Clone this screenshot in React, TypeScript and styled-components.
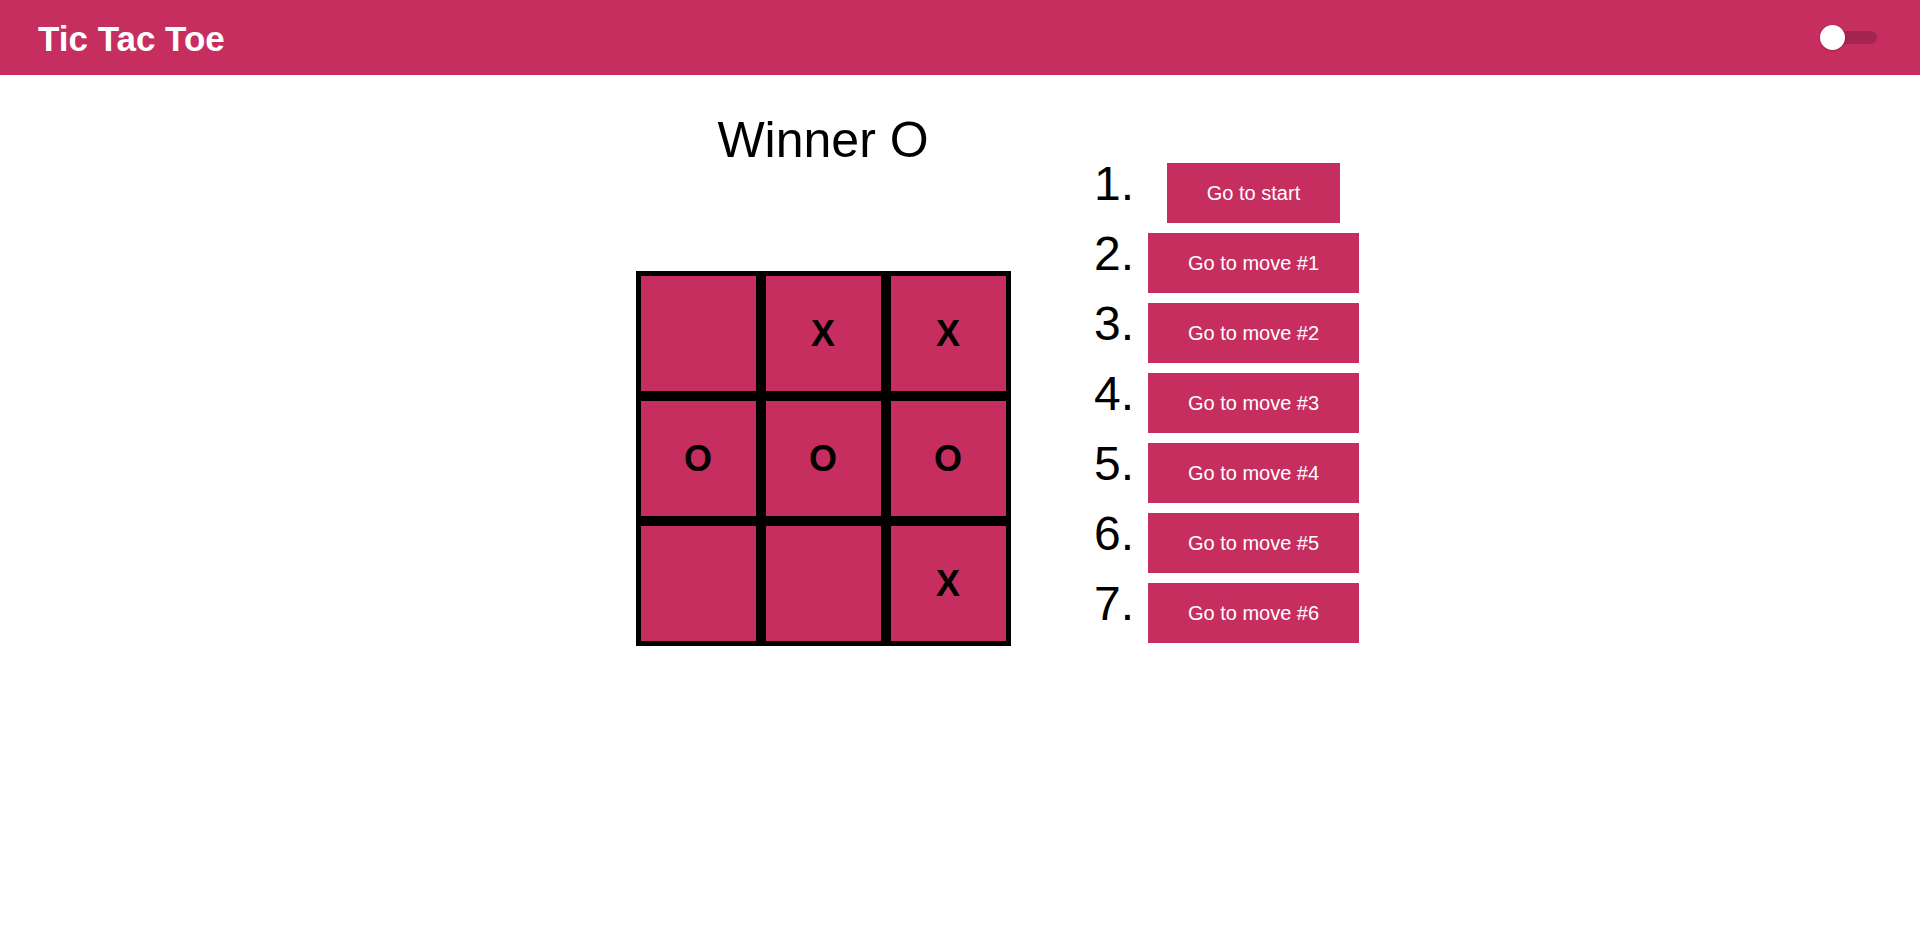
import React from "react";
import styled, { createGlobalStyle } from "styled-components";

const PINK = "#c62e5f";

const GlobalStyle = createGlobalStyle`
  html, body { margin: 0; padding: 0; background: #ffffff; }
  body { font-family: "Liberation Sans", Arial, sans-serif; color: #000; }
  * { box-sizing: border-box; }
`;

const Header = styled.header`
  height: 75px;
  background: ${PINK};
  display: flex;
  align-items: center;
  justify-content: space-between;
  padding: 0 43px 0 38px;
`;

const Title = styled.h1`
  margin: 2px 0 0 0;
  font-family: "Liberation Sans", Arial, sans-serif;
  font-size: 35px;
  font-weight: 700;
  color: #ffffff;
`;

const Toggle = styled.div`
  position: relative;
  width: 57px;
  height: 25px;
  display: flex;
  align-items: center;
`;

const Track = styled.div`
  margin-left: 4px;
  width: 53px;
  height: 13px;
  border-radius: 7px;
  background: #a32550;
`;

const Knob = styled.div`
  position: absolute;
  left: 0;
  top: 0;
  width: 25px;
  height: 25px;
  border-radius: 50%;
  background: #ffffff;
  box-shadow: 0 1px 3px rgba(0, 0, 0, 0.2);
`;

const Main = styled.main`
  display: flex;
  justify-content: center;
  align-items: flex-start;
  padding-top: 36px;
`;

const GameColumn = styled.section`
  width: 524px;
  display: flex;
  flex-direction: column;
  align-items: center;
`;

const Status = styled.div`
  font-family: "Liberation Sans", Arial, sans-serif;
  font-size: 50px;
  line-height: normal;
`;

const Board = styled.div`
  margin-top: 102px;
  display: grid;
  grid-template-columns: repeat(3, 115px);
  grid-template-rows: repeat(3, 115px);
  gap: 10px;
  padding: 5px;
  background: #000;
`;

const Square = styled.button`
  border: none;
  padding: 0;
  margin: 0;
  background: ${PINK};
  font-family: "Liberation Sans", Arial, sans-serif;
  font-size: 36px;
  font-weight: 700;
  color: #000;
  display: flex;
  align-items: center;
  justify-content: center;
`;

const History = styled.ol`
  list-style: none;
  margin: 52px 0 0 0;
  padding: 0;
  display: flex;
  flex-direction: column;
  gap: 10px;
`;

const Move = styled.li`
  display: flex;
  align-items: baseline;
  height: 60px;
`;

const MoveNumber = styled.span`
  width: 49px;
  text-align: right;
  font-family: "Liberation Sans", Arial, sans-serif;
  font-size: 48px;
  line-height: 40px;
`;

const MoveCell = styled.div`
  width: 211px;
  margin-left: 14px;
  display: flex;
  justify-content: center;
  align-items: baseline;
`;

const MoveButton = styled.button`
  height: 60px;
  padding: 0 40px;
  border: none;
  background: ${PINK};
  color: #ffffff;
  font-family: "Liberation Sans", Arial, sans-serif;
  font-size: 20px;
  white-space: nowrap;
`;

const squares = ["", "X", "X", "O", "O", "O", "", "", "X"];
const moves = [
  "Go to start",
  "Go to move #1",
  "Go to move #2",
  "Go to move #3",
  "Go to move #4",
  "Go to move #5",
  "Go to move #6",
];

export default function App() {
  return (
    <>
      <GlobalStyle />
      <Header>
        <Title>Tic Tac Toe</Title>
        <Toggle>
          <Track />
          <Knob />
        </Toggle>
      </Header>
      <Main>
        <GameColumn>
          <Status>Winner O</Status>
          <Board>
            {squares.map((s, i) => (
              <Square key={i}>{s}</Square>
            ))}
          </Board>
        </GameColumn>
        <History>
          {moves.map((m, i) => (
            <Move key={i}>
              <MoveNumber>{i + 1}.</MoveNumber>
              <MoveCell>
                <MoveButton>{m}</MoveButton>
              </MoveCell>
            </Move>
          ))}
        </History>
      </Main>
    </>
  );
}
